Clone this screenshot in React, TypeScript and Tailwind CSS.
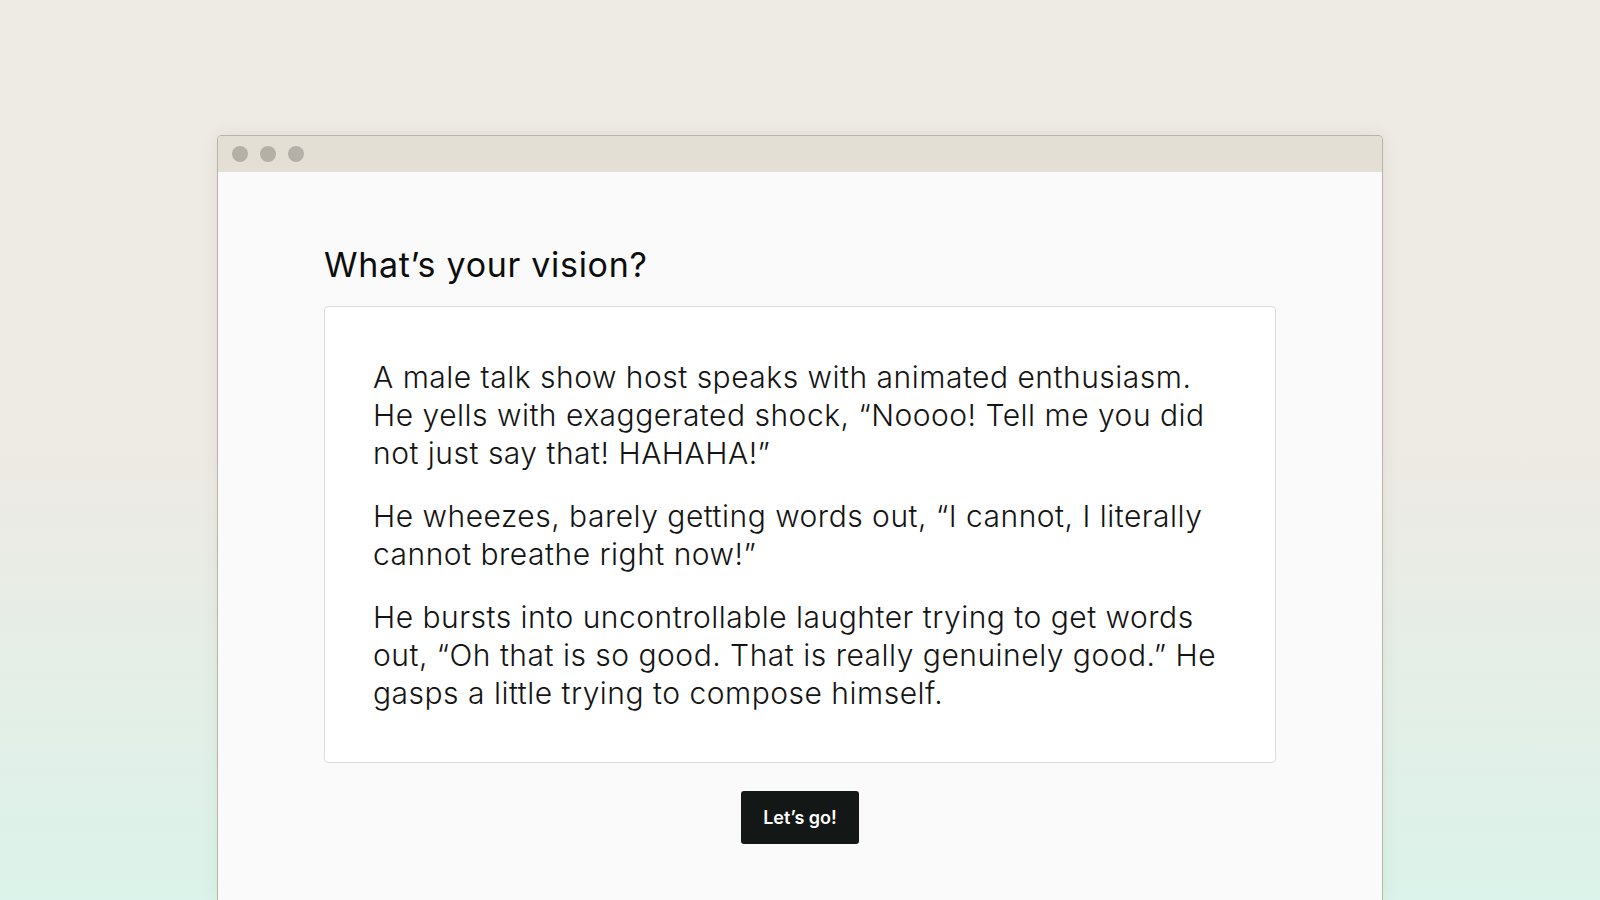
import React from "react";

export default function App() {
  return (
    <div
      className="w-full h-[900px] overflow-hidden flex justify-center pt-[135px] bg-[linear-gradient(to_bottom,#eeeae4_0%,#eeeae4_50%,#dbf3ea_100%)]"
      style={{ fontFamily: "Inter, 'Noto Sans', sans-serif" }}
    >
      <div className="w-[1166px] h-[765px] flex flex-col border border-b-0 border-[#b7b3aa] rounded-t-[5px] overflow-hidden shadow-[0_0_18px_rgba(60,50,30,0.07)]">
        <div className="h-[36px] shrink-0 bg-[#e3dfd5] flex items-center gap-3 pl-[14px]">
          <span className="w-4 h-4 rounded-full bg-[#b4b0a8]" />
          <span className="w-4 h-4 rounded-full bg-[#b4b0a8]" />
          <span className="w-4 h-4 rounded-full bg-[#b4b0a8]" />
        </div>
        <div className="flex-1 bg-[#fafafa] flex flex-col items-center pt-[72px]">
          <div className="w-[952px] flex flex-col">
            <h1 className="text-[34px] leading-[41px] font-normal tracking-[0.7px] text-[#0d0d0d] mb-[21px]">
              What’s your vision?
            </h1>
            <div className="bg-white border border-[#dcdcdc] rounded-[4px] px-12 pt-[51px] pb-[50px] flex flex-col gap-[25px] text-[30px] leading-[38px] font-light tracking-[0.5px] text-[#141414]">
              <p>
                A male talk show host speaks with animated enthusiasm. He yells with exaggerated shock, “Noooo! Tell me you did not just say that! HAHAHA!”
              </p>
              <p>
                He wheezes, barely getting words out, “I cannot, I literally cannot breathe right now!”
              </p>
              <p>
                He bursts into uncontrollable laughter trying to get words out, “Oh that is so good. That is really genuinely good.” He gasps a little trying to compose himself.
              </p>
            </div>
            <button className="mt-[28px] self-center h-[53px] px-[22px] bg-[#131716] text-white text-[18px] font-semibold rounded-[3px]">
              Let’s go!
            </button>
          </div>
        </div>
      </div>
    </div>
  );
}
